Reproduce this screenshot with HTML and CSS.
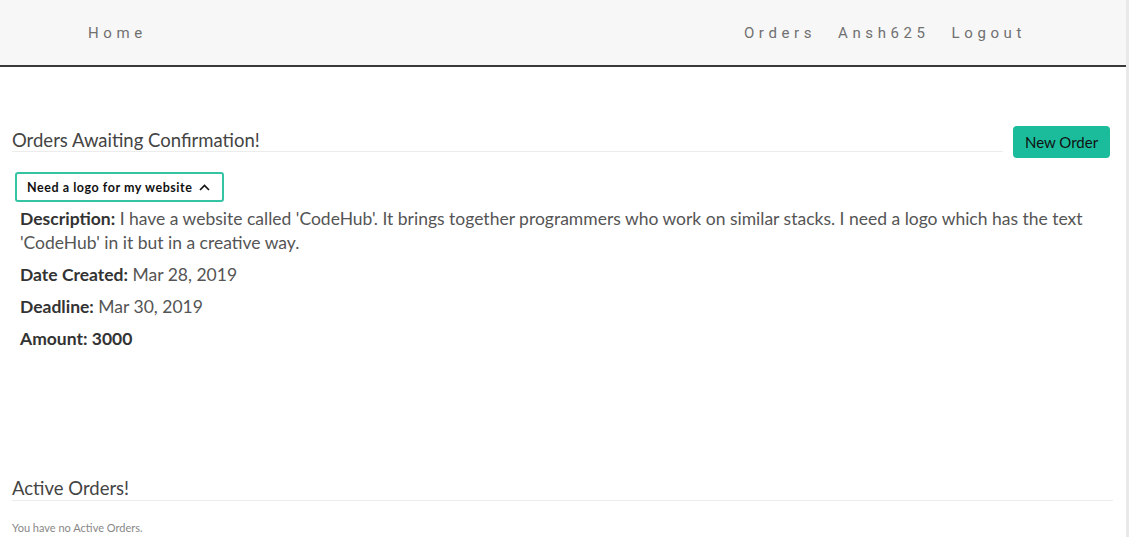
FILE: index.html
```html
<!DOCTYPE html>
<html>
<head>
<meta charset="utf-8">
<link rel="stylesheet" href="styles.css">
</head>
<body>
<div class="page">
  <nav class="navbar">
    <a class="nav-link brand" href="#">Home</a>
    <div class="nav-right">
      <a class="nav-link" href="#">Orders</a>
      <a class="nav-link" href="#">Ansh625</a>
      <a class="nav-link" href="#">Logout</a>
    </div>
  </nav>
  <main class="content">
    <section class="section awaiting">
      <div class="section-head">
        <h2 class="section-title">Orders Awaiting Confirmation!</h2>
        <button class="btn-new">New Order</button>
      </div>
      <button class="toggle">Need a logo for my website
        <svg class="chev" width="11" height="7" viewBox="0 0 11 7"><path d="M1 6 L5.5 1.5 L10 6" fill="none" stroke="#111" stroke-width="1.6"/></svg>
      </button>
      <div class="details">
        <p><b>Description:</b> I have a website called 'CodeHub'. It brings together programmers who work on similar stacks. I need a logo which has the text 'CodeHub' in it but in a creative way.</p>
        <p><b>Date Created:</b> Mar 28, 2019</p>
        <p><b>Deadline:</b> Mar 30, 2019</p>
        <p><b>Amount: 3000</b></p>
      </div>
    </section>
    <section class="section active">
      <h2 class="section-title full">Active Orders!</h2>
      <p class="empty">You have no Active Orders.</p>
    </section>
  </main>
</div>
</body>
</html>
```
FILE: styles.css
```css
html, body {
  margin: 0;
  padding: 0;
  background: #fff;
}
body {
  font-family: Lato, "Noto Sans", sans-serif;
  color: #444;
}
.page {
  min-height: 537px;
  border-right: 3px solid #e9e9e9;
}
.navbar {
  height: 65px;
  background: #f7f7f7;
  border-bottom: 2px solid #3a3a3a;
  display: flex;
  align-items: center;
  justify-content: space-between;
  padding: 0 100px 0 88px;
}
.nav-link {
  font-family: Roboto, "Liberation Sans", sans-serif;
  font-size: 15px;
  letter-spacing: 4.6px;
  color: #707070;
  text-decoration: none;
}
.nav-right {
  display: flex;
  gap: 22px;
}
.content {
  padding: 58px 13px 0 12px;
}
.section-head {
  display: flex;
  align-items: flex-start;
  gap: 10px;
}
.section-title {
  flex: 1;
  margin: 0;
  font-weight: 400;
  font-size: 18.5px;
  color: #444;
  padding: 4px 0 0;
  border-bottom: 1px solid #ececec;
}
.section-head .section-title {
  line-height: 22px;
  padding-top: 4px;
}
.btn-new {
  font-family: inherit;
  background: #1abc9c;
  border: none;
  border-radius: 4px;
  color: #111;
  font-size: 15px;
  height: 32px;
  width: 97px;
  margin-top: 1px;
  margin-right: 3px;
}
.toggle {
  margin: 14px 0 0 3px;
  display: flex;
  align-items: center;
  gap: 7px;
  height: 30px;
  padding: 0 12px 0 10px;
  background: #fff;
  border: 2px solid #34c4a4;
  border-radius: 3px;
  font-family: inherit;
  font-size: 12.5px;
  letter-spacing: 0.55px;
  font-weight: 700;
  color: #111;
}
.details {
  padding: 5px 0 0 8px;
}
.details p {
  margin: 0;
  font-size: 17.5px;
  line-height: 24px;
  color: #555;
}
.details p + p {
  margin-top: 8px;
}
.details b {
  color: #333;
  font-weight: 700;
}
.active {
  margin-top: 124px;
}
.section-title.full {
  padding: 2px 0 1px;
}
.empty {
  margin: 20px 0 0;
  font-size: 11px;
  color: #888;
}
```
